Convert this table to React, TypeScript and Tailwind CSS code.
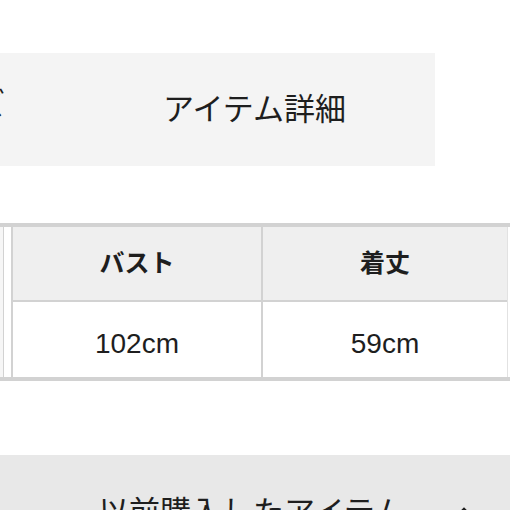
import React from "react";

const font = { fontFamily: '"Liberation Sans", "Noto Sans CJK JP", sans-serif' };

export default function App() {
  return (
    <div className="w-[510px] h-[510px] overflow-hidden bg-white text-[#1e1e1e]" style={font}>
      <div className="h-[53px]" />
      {/* tabs */}
      <div className="flex h-[113px]">
        <div className="w-[73px] shrink-0 bg-[#f4f4f4] overflow-hidden flex items-center justify-end">
          <span className="text-[31px] leading-none whitespace-nowrap mr-[68px] mb-[10px] shrink-0">サイズ</span>
        </div>
        <div className="w-[362px] shrink-0 bg-[#f4f4f4] flex items-center">
          <span className="text-[31px] leading-none whitespace-nowrap ml-[90px]">アイテム詳細</span>
        </div>
        <div className="flex-1 overflow-hidden flex items-center">
          <span className="text-[31px] leading-none whitespace-nowrap ml-[71px] shrink-0">コーディネート</span>
        </div>
      </div>
      <div className="h-[57px]" />
      {/* table */}
      <div className="flex border-y-4 border-[#d2d2d2]">
        <div className="w-[3px] bg-[#f6f6f6]" />
        <div className="w-[1px] bg-[#d2d2d2]" />
        <div className="w-[7px] bg-white" />
        <div className="w-[2px] bg-[#d2d2d2]" />
        <div className="w-[248px] flex flex-col">
          <div className="h-[73px] bg-[#efefef] flex items-center justify-center text-[25px] font-bold">バスト</div>
          <div className="h-[2px] bg-[#d2d2d2]" />
          <div className="h-[75px] bg-white flex items-center justify-center text-[28px] pt-[9px]">102cm</div>
        </div>
        <div className="w-[2px] bg-[#d2d2d2]" />
        <div className="w-[244px] flex flex-col">
          <div className="h-[73px] bg-[#efefef] flex items-center justify-center text-[25px] font-bold">着丈</div>
          <div className="h-[2px] bg-[#d2d2d2]" />
          <div className="h-[75px] bg-white flex items-center justify-center text-[28px] pt-[9px]">59cm</div>
        </div>
        <div className="w-[1px] bg-[#e2e2e2]" />
        <div className="flex-1 bg-white" />
      </div>
      <div className="h-[74px]" />
      {/* bottom bar */}
      <div className="h-[114px] bg-[#e8e8e8] flex items-center">
        <span className="text-[31px] leading-none whitespace-nowrap ml-[98px]">以前購入したアイテム</span>
        <svg className="ml-[50px]" width="18" height="12" viewBox="0 0 18 12" fill="none" stroke="#1e1e1e" strokeWidth="2.5">
          <path d="M2 10 L9 3 L16 10" />
        </svg>
      </div>
    </div>
  );
}
